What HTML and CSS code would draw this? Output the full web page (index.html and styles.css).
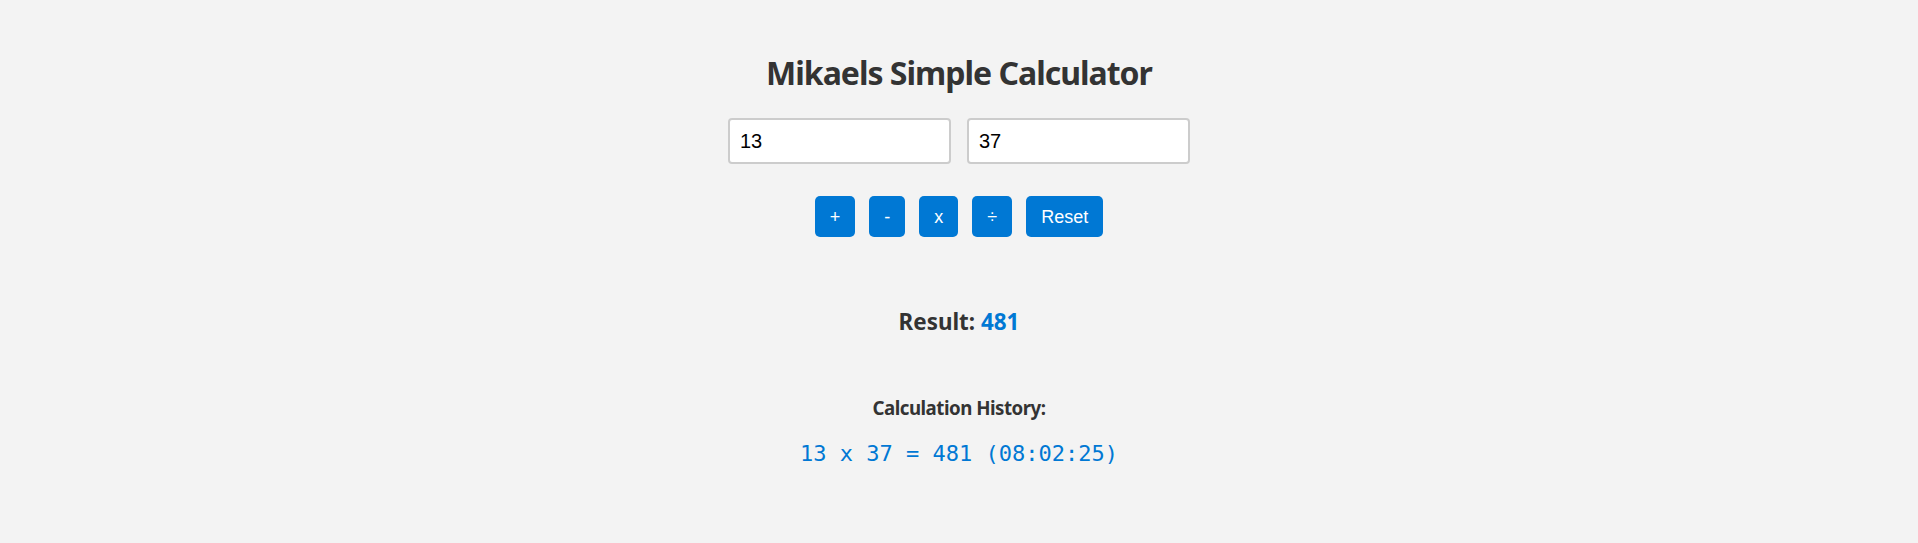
FILE: index.html
```html
<!DOCTYPE html>
<html lang="en">
<head>
<meta charset="utf-8">
<title>Mikaels Simple Calculator</title>
<link rel="stylesheet" href="styles.css">
</head>
<body>
<main class="calc">
  <h1 class="title">Mikaels Simple Calculator</h1>
  <div class="inputs">
    <input class="num" type="text" value="13">
    <input class="num" type="text" value="37">
  </div>
  <div class="buttons">
    <button class="btn">+</button>
    <button class="btn">-</button>
    <button class="btn">x</button>
    <button class="btn">÷</button>
    <button class="btn">Reset</button>
  </div>
  <p class="result">Result: <span class="result-value">481</span></p>
  <h3 class="history-title">Calculation History:</h3>
  <ul class="history">
    <li class="history-item">13 x 37 = 481 (08:02:25)</li>
  </ul>
</main>
</body>
</html>
```
FILE: styles.css
```css
html, body {
  margin: 0;
  padding: 0;
  background: #f3f3f3;
}
body {
  font-family: "Noto Sans", "Open Sans", sans-serif;
  color: #333333;
}
.calc {
  display: flex;
  flex-direction: column;
  align-items: center;
  padding-top: 57px;
}
.title {
  margin: 0;
  font-size: 32px;
  line-height: 1;
  font-weight: 700;
  letter-spacing: -1px;
}
.inputs {
  display: flex;
  gap: 16px;
  margin-top: 29px;
}
.num {
  box-sizing: border-box;
  width: 223px;
  height: 46px;
  padding: 0 10px;
  border: 2px solid #cccccc;
  border-radius: 4px;
  background: #ffffff;
  font-family: "Liberation Sans", Arial, sans-serif;
  font-size: 20px;
  color: #000000;
  outline: none;
}
.buttons {
  display: flex;
  gap: 14px;
  margin-top: 32px;
}
.btn {
  box-sizing: border-box;
  height: 41px;
  padding: 0 15px;
  border: none;
  border-radius: 5px;
  background: #0078d4;
  color: #ffffff;
  font-family: "Liberation Sans", Arial, sans-serif;
  font-size: 18px;
  line-height: 1;
  cursor: pointer;
}
.result {
  margin: 74px 0 0;
  font-size: 22.4px;
  line-height: 1;
  font-weight: 700;
}
.result-value {
  color: #0078d4;
}
.history-title {
  margin: 66px 0 0;
  font-size: 18.7px;
  line-height: 1;
  font-weight: 700;
  letter-spacing: -0.5px;
}
.history {
  list-style: none;
  margin: 25px 0 0;
  padding: 0;
}
.history-item {
  font-family: "DejaVu Sans Mono", "Liberation Mono", monospace;
  font-size: 22px;
  line-height: 1;
  color: #0078d4;
}
```
